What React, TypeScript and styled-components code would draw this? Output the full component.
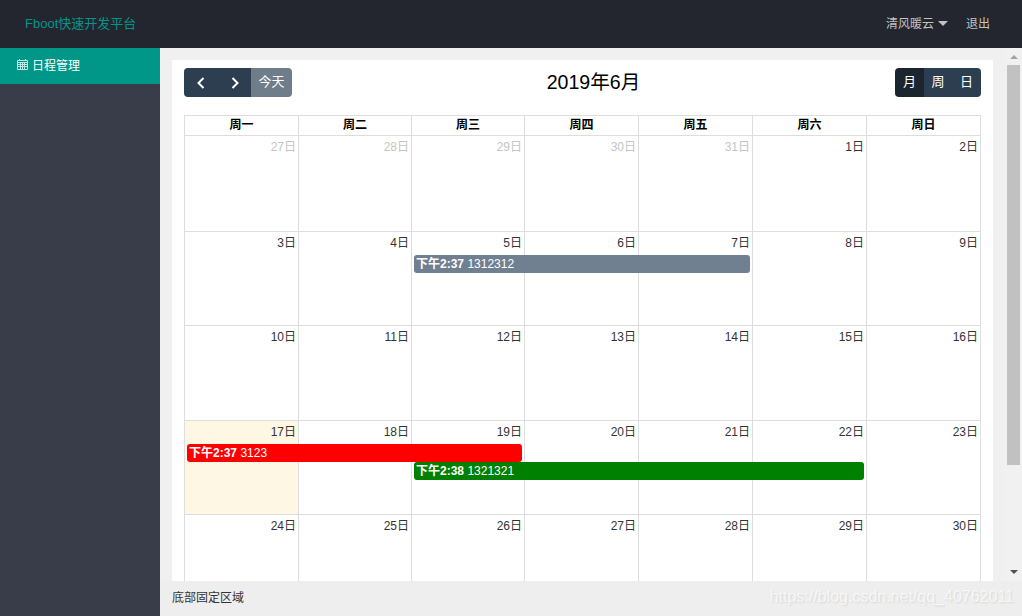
import styled, { createGlobalStyle } from "styled-components";

const GlobalStyle = createGlobalStyle`
  html, body {
    margin: 0;
    height: 100%;
    overflow: hidden;
  }
  body {
    font-family: "Liberation Sans", "Noto Sans CJK SC", sans-serif;
    font-size: 12px;
    color: #333;
  }
`;

interface Day {
  label: number;
  other?: boolean;
  today?: boolean;
}

interface CalendarEvent {
  start: number;
  end: number;
  row: number;
  time: string;
  title: string;
  color: string;
}

interface Week {
  height: number;
  days: Day[];
  events: CalendarEvent[];
}

const range = (from: number, to: number): Day[] =>
  Array.from({ length: to - from + 1 }, (_, i) => ({ label: from + i }));

const weeks: Week[] = [
  {
    height: 96,
    days: [
      ...range(27, 31).map((d) => ({ ...d, other: true })),
      ...range(1, 2),
    ],
    events: [],
  },
  {
    height: 94,
    days: range(3, 9),
    events: [
      { start: 3, end: 5, row: 0, time: "下午2:37", title: "1312312", color: "#708090" },
    ],
  },
  { height: 95, days: range(10, 16), events: [] },
  {
    height: 94,
    days: range(17, 23).map((d) => ({ ...d, today: d.label === 17 })),
    events: [
      { start: 1, end: 3, row: 0, time: "下午2:37", title: "3123", color: "#ff0000" },
      { start: 3, end: 6, row: 1, time: "下午2:38", title: "1321321", color: "#008000" },
    ],
  },
  { height: 95, days: range(24, 30), events: [] },
];

const weekdays = ["周一", "周二", "周三", "周四", "周五", "周六", "周日"];
const columns = "114px 113px 113px 114px 114px 114px 114px";

function App() {
  return (
    <Page>
      <GlobalStyle />
      <TopBar>
        <Logo>Fboot快速开发平台</Logo>
        <UserMenu>
          <UserName>
            清风暖云
            <Caret />
          </UserName>
          <span>退出</span>
        </UserMenu>
      </TopBar>
      <Body>
        <Sidebar>
          <NavItem>
            <svg width="11" height="11" viewBox="0 0 11 11" fill="none" stroke="#bfe6e1" strokeWidth="1">
              <path d="M0.5 1.5h10v9h-10zM0.5 3.5h10M0.5 5.5h10M0.5 7.5h10M2.5 0v1M8.5 0v1M3.5 3.5v7M5.5 3.5v7M7.5 3.5v7" />
            </svg>
            日程管理
          </NavItem>
        </Sidebar>
        <Main>
          <ScrollArea>
            <Content>
              <Card>
                <Toolbar>
                  <ButtonGroup>
                    <ToolButton $width={34} aria-label="prev">
                      <svg width="10" height="12" viewBox="0 0 10 12" fill="none" stroke="#fff" strokeWidth="2">
                        <path d="M7.5 1L2.5 6l5 5" />
                      </svg>
                    </ToolButton>
                    <ToolButton $width={33} aria-label="next">
                      <svg width="10" height="12" viewBox="0 0 10 12" fill="none" stroke="#fff" strokeWidth="2">
                        <path d="M2.5 1l5 5-5 5" />
                      </svg>
                    </ToolButton>
                    <ToolButton $width={41} $disabled>
                      <ButtonLabel>今天</ButtonLabel>
                    </ToolButton>
                  </ButtonGroup>
                  <Title>2019年6月</Title>
                  <ButtonGroup>
                    <ToolButton $width={29} $active>
                      <ButtonLabel>月</ButtonLabel>
                    </ToolButton>
                    <ToolButton $width={28}>
                      <ButtonLabel>周</ButtonLabel>
                    </ToolButton>
                    <ToolButton $width={29}>
                      <ButtonLabel>日</ButtonLabel>
                    </ToolButton>
                  </ButtonGroup>
                </Toolbar>
                <Calendar>
                  <WeekHeader>
                    {weekdays.map((w) => (
                      <HeadCell key={w}>{w}</HeadCell>
                    ))}
                  </WeekHeader>
                  {weeks.map((week) => (
                    <WeekRow key={week.days[0].label} style={{ height: week.height }}>
                      {week.days.map((day, i) => (
                        <DayCell key={day.label} $col={i + 1} $today={day.today}>
                          <DayNumber $other={day.other}>{day.label}日</DayNumber>
                        </DayCell>
                      ))}
                      {week.events.map((ev) => (
                        <EventBar
                          key={ev.title}
                          $start={ev.start}
                          $end={ev.end}
                          $row={ev.row + 2}
                          $color={ev.color}
                        >
                          <b>{ev.time}</b> {ev.title}
                        </EventBar>
                      ))}
                    </WeekRow>
                  ))}
                </Calendar>
              </Card>
            </Content>
            <ScrollTrack>
              <ArrowUp />
              <ThumbSlot>
                <Thumb />
              </ThumbSlot>
              <ArrowDown />
            </ScrollTrack>
          </ScrollArea>
          <Footer>
            <FooterText>底部固定区域</FooterText>
            <Watermark>https://blog.csdn.net/qq_40762011</Watermark>
          </Footer>
        </Main>
      </Body>
    </Page>
  );
}

export default App;

const Page = styled.div`
  width: 1022px;
  height: 616px;
  display: flex;
  flex-direction: column;
  overflow: hidden;
`;

const TopBar = styled.header`
  height: 48px;
  box-sizing: border-box;
  flex: none;
  background: #23262e;
  display: flex;
  align-items: center;
  justify-content: space-between;
  padding: 0 32px 4px 25px;
`;

const Logo = styled.div`
  color: #009688;
  font-size: 13px;
`;

const UserMenu = styled.div`
  display: flex;
  align-items: center;
  gap: 18px;
  color: #c2c2c2;
`;

const UserName = styled.span`
  display: flex;
  align-items: center;
  gap: 4px;
`;

const Caret = styled.i`
  width: 0;
  height: 0;
  margin-top: 2px;
  border-left: 5px solid transparent;
  border-right: 5px solid transparent;
  border-top: 5px solid #c2c2c2;
`;

const Body = styled.div`
  flex: 1;
  display: flex;
  min-height: 0;
`;

const Sidebar = styled.aside`
  width: 160px;
  flex: none;
  background: #393d49;
`;

const NavItem = styled.div`
  height: 36px;
  box-sizing: border-box;
  background: #009688;
  color: #fff;
  display: flex;
  align-items: center;
  gap: 4px;
  padding: 0 0 4px 17px;
`;

const Main = styled.main`
  flex: 1;
  min-width: 0;
  display: flex;
  flex-direction: column;
`;

const ScrollArea = styled.div`
  flex: 1;
  min-height: 0;
  display: flex;
  background: #f0f0f0;
`;

const Content = styled.div`
  flex: 1;
  min-width: 0;
  overflow: hidden;
  padding: 12px 12px 0;
`;

const Card = styled.div`
  background: #fff;
  padding: 8px 12px 12px;
`;

const Toolbar = styled.div`
  display: flex;
  align-items: center;
  justify-content: space-between;
  margin-bottom: 18px;
`;

const ButtonGroup = styled.div`
  display: flex;
  border-radius: 4px;
  overflow: hidden;
`;

const ToolButton = styled.button<{ $width: number; $active?: boolean; $disabled?: boolean }>`
  width: ${(p) => p.$width}px;
  height: 29px;
  padding: 0;
  border: 0;
  display: flex;
  align-items: center;
  justify-content: center;
  color: #fff;
  font: inherit;
  font-size: 13px;
  background: ${(p) => (p.$active ? "#1a252f" : p.$disabled ? "#6f7d8b" : "#2c3e50")};
`;

const ButtonLabel = styled.span`
  margin-bottom: 4px;
`;

const Title = styled.h2`
  margin: 0 0 2px;
  font-size: 19.6px;
  line-height: 20px;
  font-weight: 400;
  color: #000;
`;

const Calendar = styled.div`
  width: 797px;
  border-right: 1px solid #ddd;
  box-sizing: border-box;
`;

const WeekHeader = styled.div`
  display: grid;
  grid-template-columns: ${columns};
  border-top: 1px solid #ddd;
  height: 20px;
  box-sizing: border-box;
`;

const HeadCell = styled.div`
  border-left: 1px solid #ddd;
  text-align: center;
  font-weight: 700;
  color: #000;
  line-height: 19px;
`;

const WeekRow = styled.div`
  display: grid;
  grid-template-columns: ${columns};
  grid-template-rows: 24px 18px 18px 1fr;
`;

const DayCell = styled.div<{ $col: number; $today?: boolean }>`
  grid-column: ${(p) => p.$col};
  grid-row: 1 / -1;
  border-left: 1px solid #ddd;
  border-top: 1px solid #ddd;
  background: ${(p) => (p.$today ? "#fdf7e3" : "#fff")};
  text-align: right;
  padding: 1px 2px 0 0;
`;

const DayNumber = styled.span<{ $other?: boolean }>`
  color: ${(p) => (p.$other ? "#c4c4c4" : "#333")};
`;

const EventBar = styled.div<{ $start: number; $end: number; $row: number; $color: string }>`
  grid-column: ${(p) => p.$start} / ${(p) => p.$end + 1};
  grid-row: ${(p) => p.$row};
  z-index: 1;
  margin: 0 2px 0 3px;
  padding-left: 2px;
  background: ${(p) => p.$color};
  border-radius: 3px;
  color: #fff;
  line-height: 18px;
  white-space: nowrap;
  overflow: hidden;
`;

const ScrollTrack = styled.div`
  width: 17px;
  flex: none;
  display: flex;
  flex-direction: column;
  align-items: center;
  background: #f1f1f1;
`;

const ArrowUp = styled.i`
  width: 0;
  height: 0;
  margin: 7px 0 6px;
  border-left: 4px solid transparent;
  border-right: 4px solid transparent;
  border-bottom: 4px solid #a3a3a3;
`;

const ThumbSlot = styled.div`
  flex: 1;
  align-self: stretch;
  padding: 0 2px;
`;

const Thumb = styled.div`
  height: 400px;
  background: #c1c1c1;
`;

const ArrowDown = styled.i`
  width: 0;
  height: 0;
  margin: 6px 0 7px;
  border-left: 4px solid transparent;
  border-right: 4px solid transparent;
  border-top: 4px solid #505050;
`;

const Footer = styled.footer`
  height: 35px;
  box-sizing: border-box;
  flex: none;
  background: #eee;
  display: flex;
  align-items: center;
  justify-content: space-between;
  padding: 0 8px 0 12px;
  color: #333;
`;

const FooterText = styled.span`
  margin-bottom: 4px;
`;

const Watermark = styled.span`
  font-size: 16px;
  margin-bottom: 3px;
  color: rgba(255, 255, 255, 0.7);
  text-shadow: 1px 1px 2px rgba(0, 0, 0, 0.1);
`;
